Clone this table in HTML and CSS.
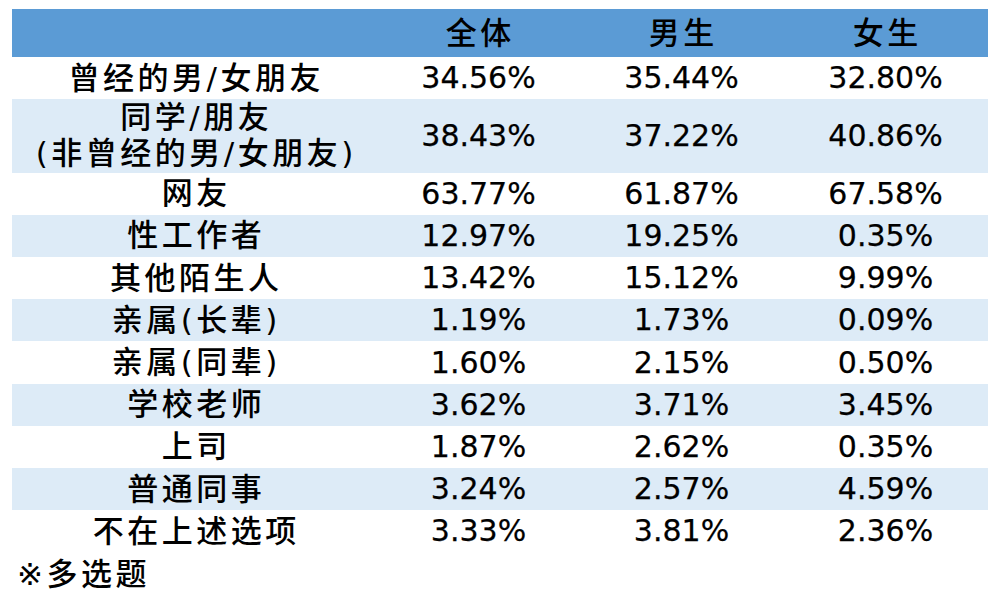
FILE: index.html
```html
<!DOCTYPE html>
<html lang="zh-CN">
<head>
<meta charset="utf-8">
<title>表</title>
<link rel="stylesheet" href="styles.css">
</head>
<body>
<div class="table">
  <div class="row head">
    <div class="cell label"></div>
    <div class="cell"><span class="cjk">全体</span></div>
    <div class="cell"><span class="cjk">男生</span></div>
    <div class="cell"><span class="cjk">女生</span></div>
  </div>
  <div class="row">
    <div class="cell label"><span class="cjk">曾经的男/女朋友</span></div>
    <div class="cell">34.56%</div><div class="cell">35.44%</div><div class="cell">32.80%</div>
  </div>
  <div class="row alt tall">
    <div class="cell label"><span class="cjk two">同学/朋友<br>(非曾经的男/女朋友)</span></div>
    <div class="cell">38.43%</div><div class="cell">37.22%</div><div class="cell">40.86%</div>
  </div>
  <div class="row">
    <div class="cell label"><span class="cjk">网友</span></div>
    <div class="cell">63.77%</div><div class="cell">61.87%</div><div class="cell">67.58%</div>
  </div>
  <div class="row alt">
    <div class="cell label"><span class="cjk">性工作者</span></div>
    <div class="cell">12.97%</div><div class="cell">19.25%</div><div class="cell">0.35%</div>
  </div>
  <div class="row">
    <div class="cell label"><span class="cjk">其他陌生人</span></div>
    <div class="cell">13.42%</div><div class="cell">15.12%</div><div class="cell">9.99%</div>
  </div>
  <div class="row alt">
    <div class="cell label"><span class="cjk">亲属(长辈)</span></div>
    <div class="cell">1.19%</div><div class="cell">1.73%</div><div class="cell">0.09%</div>
  </div>
  <div class="row">
    <div class="cell label"><span class="cjk">亲属(同辈)</span></div>
    <div class="cell">1.60%</div><div class="cell">2.15%</div><div class="cell">0.50%</div>
  </div>
  <div class="row alt">
    <div class="cell label"><span class="cjk">学校老师</span></div>
    <div class="cell">3.62%</div><div class="cell">3.71%</div><div class="cell">3.45%</div>
  </div>
  <div class="row">
    <div class="cell label"><span class="cjk">上司</span></div>
    <div class="cell">1.87%</div><div class="cell">2.62%</div><div class="cell">0.35%</div>
  </div>
  <div class="row alt">
    <div class="cell label"><span class="cjk">普通同事</span></div>
    <div class="cell">3.24%</div><div class="cell">2.57%</div><div class="cell">4.59%</div>
  </div>
  <div class="row">
    <div class="cell label"><span class="cjk">不在上述选项</span></div>
    <div class="cell">3.33%</div><div class="cell">3.81%</div><div class="cell">2.36%</div>
  </div>
</div>
<p class="note"><span class="cjk">※多选题</span></p>
</body>
</html>
```
FILE: styles.css
```css
html, body {
  margin: 0;
  background: #ffffff;
}
body {
  padding: 9px 12px 0 12px;
  font-family: "DejaVu Sans", "Noto Sans CJK SC", sans-serif;
  font-size: 30px;
  color: #000000;
}
.table {
  width: 976px;
  display: flex;
  flex-direction: column;
}
.row {
  display: grid;
  grid-template-columns: 365px 203px 203px 205px;
  height: 42.2px;
  align-items: center;
}
.row.head {
  height: 48px;
  background: #5b9bd5;
}
.row.alt {
  background: #ddebf7;
}
.row.tall {
  height: 73.5px;
}
.cell {
  text-align: center;
  line-height: 36px;
  white-space: nowrap;
  -webkit-text-stroke: 0.25px #000000;
}
.cjk {
  font-size: 31px;
  font-weight: 500;
  letter-spacing: 3.5px;
  margin-right: -3.5px;
  -webkit-text-stroke: 0;
}
.two {
  display: inline-block;
  line-height: 36px;
}
.note {
  margin: 4px 0 0 5px;
  line-height: 36px;
}
```
